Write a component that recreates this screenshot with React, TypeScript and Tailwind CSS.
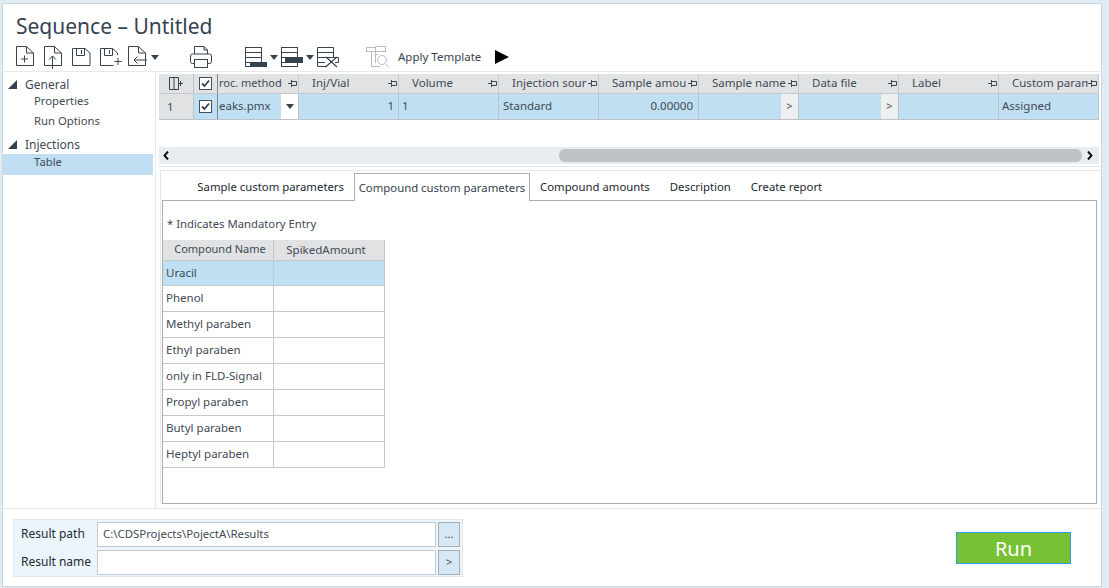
import React from "react";

const S = { fill: "none", stroke: "#36434f", strokeWidth: 1 } as const;

function Doc({ children }: { children?: React.ReactNode }) {
  return (
    <svg width="24" height="24" viewBox="0 0 24 24" className="block">
      <g {...S}>
        <path d="M1.5 1.5H11.5L18.5 8V20.5H1.5Z" />
        <path d="M11.5 1.5V8H18.5" />
        {children}
      </g>
    </svg>
  );
}

function Save({ plus }: { plus?: boolean }) {
  return (
    <svg width="24" height="24" viewBox="0 0 24 24" className="block">
      <g {...S}>
        <path d={plus ? "M14.5 20.5H1.5V3.5H13.5L18.5 8V10" : "M1.5 3.5H14L19 8V20.5H1.5Z"} />
        <path d="M5.5 3.5V10.5H13.5V3.5" />
        <path d="M10.5 5V9" />
        {plus && <path d="M19 13V20M15.5 16.5H22.5" />}
      </g>
    </svg>
  );
}

function Caret({ color = "#36434f" }: { color?: string }) {
  return (
    <svg width="8" height="5" viewBox="0 0 8 5" className="block">
      <path d="M0 0H8L4 5Z" fill={color} />
    </svg>
  );
}

function Rows({ dark }: { dark: "wide" | "mid" }) {
  return (
    <svg width="25" height="22" viewBox="0 0 25 22" className="block">
      <g {...S}>
        <rect x="0.5" y="1.5" width="16" height="5" />
        <rect x="0.5" y="6.5" width="16" height="5" />
        <rect x="0.5" y="11.5" width="16" height="5" />
        <rect x="0.5" y="16.5" width="16" height="4" />
      </g>
      {dark === "wide" && <rect x="5" y="16" width="17" height="5" fill="#36434f" />}
      {dark === "mid" && <rect x="4" y="11" width="18" height="6" fill="#36434f" />}
    </svg>
  );
}

function RowsX() {
  return (
    <svg width="24" height="22" viewBox="0 0 24 22" className="block">
      <g {...S}>
        <path d="M0.5 1.5H16.5V11.5H0.5ZM0.5 6.5H16.5" />
        <path d="M0.5 11.5V16.5H8M0.5 16.5V20.5H10" />
        <path d="M16.5 11.5H21.5V16.5H18" />
        <path d="M9 11L20 21M20 11L8.5 21" strokeWidth="1.2" />
      </g>
    </svg>
  );
}

function Printer() {
  return (
    <svg width="24" height="24" viewBox="0 0 24 24" className="block">
      <g {...S}>
        <path d="M5.5 9V1.5H15L18.5 5V9" />
        <path d="M15 1.5V5H18.5" />
        <path d="M5 18.5H3.5Q1.5 18.5 1.5 16.5V11Q1.5 9 3.5 9H20.5Q22.5 9 22.5 11V16.5Q22.5 18.5 20.5 18.5H19" />
        <rect x="5.5" y="14.5" width="13" height="8" />
      </g>
    </svg>
  );
}

function TemplateIcon() {
  return (
    <svg width="24" height="24" viewBox="0 0 24 24" className="block">
      <g fill="none" stroke="#b9bdc1" strokeWidth="1">
        <rect x="0.5" y="2.5" width="9" height="4" />
        <rect x="9.5" y="1.5" width="10" height="5" />
        <path d="M5.5 6.5V21.5H14M9.5 9.5H12M9.5 6.5V18" />
        <circle cx="16" cy="15" r="4.5" />
        <path d="M19 18.5L23 22.5" />
      </g>
    </svg>
  );
}

function Pin() {
  return (
    <svg width="9" height="7" viewBox="0 0 9 7" className="block shrink-0">
      <path d="M0 3.5H3M3.5 0V7M3.5 1.5H8.5V5.5H3.5" fill="none" stroke="#3d4853" strokeWidth="1" />
    </svg>
  );
}

function Check() {
  return (
    <span className="flex h-[13px] w-[13px] items-center justify-center border border-[#44505b] bg-white">
      <svg width="9" height="9" viewBox="0 0 9 9" className="block">
        <path d="M1 4.5L3.5 7L8 1.5" fill="none" stroke="#36434f" strokeWidth="1.8" />
      </svg>
    </span>
  );
}

const headers = [
  { t: "roc. method", cls: "pl-[1px] text-[11px]" },
  { t: "Inj/Vial", cls: "pl-[13px]" },
  { t: "Volume", cls: "pl-[13px]" },
  { t: "Injection sour", cls: "pl-[13px]" },
  { t: "Sample amou", cls: "pl-[13px]" },
  { t: "Sample name", cls: "pl-[13px]" },
  { t: "Data file", cls: "pl-[13px]" },
  { t: "Label", cls: "pl-[13px]" },
  { t: "Custom param", cls: "pl-[13px]" },
];

const compounds = ["Phenol", "Methyl paraben", "Ethyl paraben", "only in FLD-Signal", "Propyl paraben", "Butyl paraben", "Heptyl paraben"];

function BodyCell({ children, cls = "" }: { children?: React.ReactNode; cls?: string }) {
  return <div className={`flex h-[25px] w-[100px] shrink-0 items-center border-r border-[#bcc3c8] bg-[#c0dff3] pb-[1px] ${cls}`}>{children}</div>;
}

function MoreCell() {
  return (
    <div className="flex h-[25px] w-[100px] shrink-0 justify-end border-r border-[#bcc3c8] bg-[#c0dff3]">
      <span className="flex h-full w-[17px] items-center justify-center bg-[#efefef] text-[11px]">&gt;</span>
    </div>
  );
}

export default function App() {
  return (
    <div className="h-[588px] w-[1109px] overflow-hidden bg-[#dfebf5] pb-px pl-[2px] pr-[7px] pt-[3px] font-['Noto_Sans',sans-serif] text-[11.5px] text-[#3f4a55]">
      <div className="flex h-full flex-col border-b border-l border-r border-t border-[#cfd5da] bg-white">
        {/* Title */}
        <div className="flex h-[37px] shrink-0 items-end pb-[1px] pl-[13px] text-[21px] leading-[28px] text-[#36434f]">Sequence – Untitled</div>

        {/* Toolbar */}
        <div className="mt-[4px] flex h-[24px] shrink-0 items-center pl-[12px]">
          <div className="w-[28px]">
            <Doc><path d="M9.5 10.5V17.5M6 14H13" /></Doc>
          </div>
          <div className="w-[28px]">
            <Doc><path d="M9.5 24V11M6 14.5L9.5 11L13 14.5" /></Doc>
          </div>
          <div className="w-[28px]"><Save /></div>
          <div className="w-[28px]"><Save plus /></div>
          <div className="w-[24px]">
            <Doc><path d="M20 15H7M10.5 11.5L7 15L10.5 18.5" /></Doc>
          </div>
          <Caret />
          <div className="ml-[30px]"><Printer /></div>
          <div className="ml-[32px] flex items-center">
            <Rows dark="wide" />
            <Caret />
          </div>
          <div className="ml-[3px] flex items-center">
            <Rows dark="mid" />
            <Caret />
          </div>
          <div className="ml-[3px]"><RowsX /></div>
          <div className="ml-[25px]"><TemplateIcon /></div>
          <span className="ml-[8px] text-[11.5px] text-[#36434f]">Apply Template</span>
          <svg width="16" height="14" viewBox="0 0 16 14" className="ml-[13px] block">
            <path d="M1 0L15 7L1 14Z" fill="#000" />
          </svg>
        </div>

        {/* Main */}
        <div className="mt-[2px] flex min-h-0 flex-1 border-y border-[#e6e8ea]">
          {/* Nav */}
          <div className="w-[153px] shrink-0 border-r border-[#e6e8ea] pt-[4px]">
            <div className="flex h-[17px] items-center pl-[5px] text-[12px]">
              <svg width="9" height="9" viewBox="0 0 9 9" className="mr-[8px]"><path d="M9 0V9H0Z" fill="#36434f" /></svg>
              General
            </div>
            <div className="flex h-[17px] items-center pl-[31px] text-[11.3px]">Properties</div>
            <div className="flex h-[22px] items-center pl-[31px] text-[11.3px]">Run Options</div>
            <div className="mt-[3px] flex h-[19px] items-center pl-[5px] text-[12px]">
              <svg width="9" height="9" viewBox="0 0 9 9" className="mr-[8px]"><path d="M9 0V9H0Z" fill="#36434f" /></svg>
              Injections
            </div>
            <div className="mr-[2px] flex h-[21px] items-center bg-[#c0dff3] pb-[5px] pl-[31px] text-[11.3px]">Table</div>
          </div>

          {/* Right */}
          <div className="flex min-w-0 flex-1 flex-col pl-[3px] pt-[2px]">
            {/* Grid */}
            <div className="w-[940px] overflow-hidden border-b border-[#bcc3c8]">
              <div className="flex h-[19px] bg-[#e1e2e4]">
                <div className="flex w-[35px] shrink-0 items-center justify-center border-r border-[#bcc3c8]">
                  <svg width="14" height="13" viewBox="0 0 14 13" className="block">
                    <path d="M0.5 0.5H9.5V12.5H0.5ZM5 0.5V12.5M11.5 4V9M9 6.5H14" fill="none" stroke="#36434f" />
                  </svg>
                </div>
                <div className="flex w-[24px] shrink-0 items-center justify-center border-r border-[#7f868c]"><Check /></div>
                {headers.map((h, i) => (
                  <div key={h.t} className={`flex shrink-0 items-center border-r border-[#c6cacd] pb-[1px] pr-[1px] ${i === 0 ? "w-[81px]" : "w-[100px]"} ${h.cls}`}>
                    <span className="min-w-0 flex-1 overflow-hidden whitespace-nowrap">{h.t}</span>
                    <Pin />
                  </div>
                ))}
              </div>
              <div className="flex h-[26px] border-t border-[#c3c9ce]">
                <div className="flex w-[35px] shrink-0 items-center border-r border-[#bcc3c8] bg-[#e1e2e4] pl-[8px]">1</div>
                <div className="flex w-[24px] shrink-0 items-center justify-center border-r border-[#7f868c] bg-[#c0dff3]"><Check /></div>
                <div className="flex h-[25px] w-[81px] shrink-0 items-center border-r border-[#bcc3c8] bg-[#c0dff3] pl-[1px]">
                  <span className="flex-1 overflow-hidden whitespace-nowrap pb-[1px]">eaks.pmx</span>
                  <span className="flex h-full w-[17px] items-center justify-center bg-white"><Caret /></span>
                </div>
                <BodyCell cls="justify-end pr-[4px]">1</BodyCell>
                <BodyCell cls="pl-[3px]">1</BodyCell>
                <BodyCell cls="pl-[4px]">Standard</BodyCell>
                <BodyCell cls="justify-end pr-[5px]">0.00000</BodyCell>
                <MoreCell />
                <MoreCell />
                <BodyCell />
                <BodyCell cls="pl-[3px]">Assigned</BodyCell>
              </div>
            </div>

            {/* Scrollbar */}
            <div className="mt-[27px] flex h-[17px] w-[940px] items-center bg-[#e8edf1] pl-[4px] pr-[6px]">
              <svg width="6" height="9" viewBox="0 0 6 9" className="block shrink-0"><path d="M5 0.5L1.5 4.5L5 8.5" fill="none" stroke="#111" strokeWidth="2" /></svg>
              <div className="ml-[390px] h-[13px] flex-1 rounded-[6px] bg-[#bec3c6]" />
              <svg width="6" height="9" viewBox="0 0 6 9" className="ml-[5px] block shrink-0"><path d="M1 0.5L4.5 4.5L1 8.5" fill="none" stroke="#111" strokeWidth="2" /></svg>
            </div>

            <div className="mt-[2px] h-px bg-[#e6e8ea]" />

            {/* Tabs panel */}
            <div className="ml-[1px] mt-[3px] flex min-h-0 flex-1 flex-col border-l border-t border-[#e6e8ea] pl-[1px] pr-[4px]">
              <div className="flex h-[29px] shrink-0 items-end text-[11.35px] text-[#1d2833]">
                <div className="flex h-[28px] w-[192px] items-center justify-end pr-[10px] pt-[2px]">Sample custom parameters</div>
                <div className="-mb-px relative z-10 flex h-[28px] w-[176px] items-center justify-center border border-b-0 border-[#a6adb3] bg-white text-[#36434f]">Compound custom parameters</div>
                <div className="flex h-[28px] items-center pl-[10px] pt-[2px]">Compound amounts</div>
                <div className="flex h-[28px] items-center pl-[20px] pt-[2px]">Description</div>
                <div className="flex h-[28px] items-center pl-[20px] pt-[2px]">Create report</div>
              </div>
              <div className="flex min-h-0 flex-1 flex-col border border-[#a6adb3]">
                <div className="flex h-[39px] shrink-0 items-center pl-[4px] pt-[8px] text-[11.3px]">* Indicates Mandatory Entry</div>
                <div className="w-[222px] border-b border-r border-[#c3c9ce]">
                  <div className="flex h-[20px] bg-[#e1e2e4] pb-[1px] text-[11px]">
                    <div className="flex w-[111px] items-center justify-center border-r border-[#bcc3c8] pl-[4px]">Compound Name</div>
                    <div className="flex flex-1 items-center justify-center pr-[6px] text-[11.5px]">SpikedAmount</div>
                  </div>
                  <div className="flex h-[26px] border-y border-[#c3c9ce] bg-[#c0dff3]">
                    <div className="flex w-[111px] items-center border-r border-[#c3c9ce] pb-[1px] pl-[3px]">Uracil</div>
                  </div>
                  {compounds.map((c) => (
                    <div key={c} className="flex h-[26px] border-b border-[#c3c9ce] last:h-[25px] last:border-b-0">
                      <div className="flex w-[111px] items-center border-r border-[#c3c9ce] pb-[1px] pl-[3px]">{c}</div>
                    </div>
                  ))}
                </div>
              </div>
            </div>
            <div className="h-[4px] shrink-0" />
          </div>
        </div>

        {/* Footer */}
        <div className="flex h-[77px] shrink-0 items-start justify-between pl-[10px] pr-[30px]">
          <div className="mt-[10px] flex h-[58px] w-[450px] flex-col justify-center gap-[3px] border border-[#dfe6ec] bg-[#edf5fc] pl-[7px] pr-[2px]">
            <div className="flex h-[25px] items-center">
              <span className="w-[76px] text-[12px] text-[#1d2833]">Result path</span>
              <div className="flex h-[25px] w-[339px] items-center border border-[#c3c9ce] bg-white pl-[5px] text-[11.4px]">C:\CDSProjects\PojectA\Results</div>
              <div className="ml-[2px] flex h-[25px] w-[22px] items-center justify-center border border-[#a6adb3] bg-[#d6e7f5]">...</div>
            </div>
            <div className="flex h-[25px] items-center">
              <span className="w-[76px] text-[12px] text-[#1d2833]">Result name</span>
              <div className="h-[25px] w-[339px] border border-[#c3c9ce] bg-white" />
              <div className="ml-[2px] flex h-[25px] w-[22px] items-center justify-center border border-[#a6adb3] bg-[#d6e7f5]">&gt;</div>
            </div>
          </div>
          <button className="mt-[23px] flex h-[32px] w-[115px] items-center justify-center border border-[#2f9ee8] bg-[#76c234] pt-[1px] text-[20px] text-white">Run</button>
        </div>
      </div>
    </div>
  );
}
